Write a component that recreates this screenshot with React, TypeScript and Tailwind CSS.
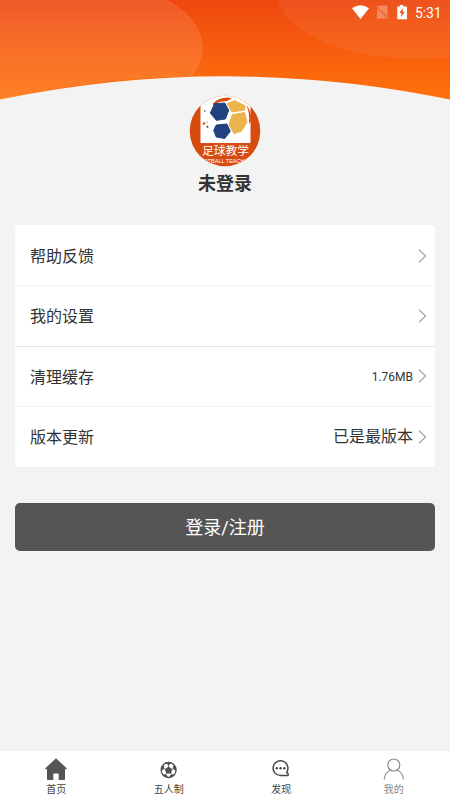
import type { ReactNode } from "react";

type MenuItem = {
  label: string;
  value?: string;
  valueClass?: string;
  borderClass: string;
};

type Tab = {
  label: string;
  icon: ReactNode;
  active?: boolean;
};

const menuItems: MenuItem[] = [
  { label: "帮助反馈", borderClass: "border-b border-[#f4f4f4]" },
  { label: "我的设置", borderClass: "border-b border-[#e4e4e4]" },
  {
    label: "清理缓存",
    value: "1.76MB",
    valueClass: "pt-px text-[12px]",
    borderClass: "border-b border-[#f4f4f4]",
  },
  {
    label: "版本更新",
    value: "已是最版本",
    valueClass: "pt-px text-[16px]",
    borderClass: "",
  },
];

const tabs: Tab[] = [
  { label: "首页", icon: <HomeIcon /> },
  { label: "五人制", icon: <BallIcon /> },
  { label: "发现", icon: <ChatIcon /> },
  { label: "我的", icon: <UserIcon />, active: true },
];

function HomeIcon() {
  return (
    <svg className="h-6 w-6" viewBox="0 0 24 24" fill="#555">
      <path d="M12 1.2 22.6 11.3c.5.5.2 1-.4 1H21v9.7c0 .6-.3.9-.9.9h-5.4v-6.3H9.3v6.3H3.9c-.6 0-.9-.3-.9-.9v-9.7H1.8c-.6 0-.9-.5-.4-1z" />
    </svg>
  );
}

function BallIcon() {
  return (
    <svg className="h-6 w-6" viewBox="0 0 24 24">
      <circle cx="11.6" cy="13" r="7.5" fill="#fff" stroke="#505050" strokeWidth="1.3" />
      <g fill="#505050">
        <path d="m11.6 9.5 3.7 2.7-1.4 4.2H9.3l-1.4-4.2z" />
        <path d="m11.6 8.3-3.4-2.5h6.8zM4 14l3-2 .2-3.1-1.6-.6A8 8 0 0 0 4 14zM19.2 14l-3-2-.2-3.1 1.600-.6a8 8 0 0 1 1.600 5.700zM10.700 20.700 9.800 18l-2.900-.8-1.700.9a8 8 0 0 0 5.500 2.600zM12.500 20.700l.9-2.700 2.900-.8 1.700.9a8 8 0 0 1-5.500 2.600z" />
      </g>
      <path
        d="M11.6 10V7M8.500 12.300l-2-.8M14.700 12.300l2-.8M9.600 16l-1.300 1.800M13.600 16l1.300 1.800"
        stroke="#505050"
        strokeWidth=".8"
      />
    </svg>
  );
}

function ChatIcon() {
  return (
    <svg className="h-6 w-6" viewBox="0 -0.200 24 24" fill="none">
      <path
        d="M17.600 15.200A7.400 7.400 0 1 0 11.500 18.400h7.600v-2z"
        stroke="#484848"
        strokeWidth="1.500"
        strokeLinejoin="round"
      />
      <g fill="#484848">
        <circle cx="7.800" cy="11" r="1.200" />
        <circle cx="11.600" cy="11" r="1.200" />
        <circle cx="15.400" cy="11" r="1.200" />
      </g>
    </svg>
  );
}

function UserIcon() {
  return (
    <svg className="h-6 w-6" viewBox="0 0 24 24" fill="none" stroke="#8c8c8c" strokeWidth="1.2">
      <circle cx="11.8" cy="8" r="6" />
      <path d="M2.2 22c.6-4.7 3.6-8.2 7-9M21.4 22c-.6-4.7-3.6-8.2-7-9" strokeLinecap="round" />
    </svg>
  );
}

function StatusBar() {
  return (
    <div className="relative flex h-[25px] items-center justify-end gap-[6px] pr-[9px] text-white">
      <svg className="h-[15px] w-[58px]" viewBox="0 0 58 15">
        <path d="M1 3.2Q9.5-2.8 18 3.2L9.5 14z" fill="#fff" />
        <path d="M29 .6h7.5v10.2L27 1.9zM26 3.2l9.8 10.2H26zM24.6.8l.8-.6 12.4 13-.8.6z" fill="#fff" opacity=".3" />
        <path d="M48.8 0h3.5v1.4H56v12.8H46.3V1.4h2.5z" fill="#fff" />
        <path d="m52 3-3.7 5.1h2.2l-.5 4.1 3.8-5.400h-2.200z" fill="#e8541c" />
      </svg>
      <span className="w-[26px] font-[Roboto,sans-serif] text-[14px] leading-none tracking-[-0.1px]">5:31</span>
    </div>
  );
}

function Header() {
  return (
    <header className="relative h-[95px]">
      <svg className="absolute top-0 left-0 h-[100px] w-full" viewBox="0 0 450 100">
        <defs>
          <linearGradient id="sky" x1="0" y1="0" x2="0" y2="1">
            <stop offset="0" stopColor="#ee480f" />
            <stop offset="1" stopColor="#ff720c" />
          </linearGradient>
        </defs>
        <path d="M0 0H450V99.5Q225 53 0 99.5z" fill="url(#sky)" />
        <path d="M0 0H168C190 13 203 30 203 47C203 58 199 67 192 76.5Q95 78 0 99.5z" fill="#fff" opacity=".11" />
        <path d="M278 0C282 28 340 58 408 58Q430 59 450 57V0z" fill="#fff" opacity=".06" />
      </svg>
      <StatusBar />
    </header>
  );
}

function Logo() {
  return (
    <svg className="relative h-[72px] w-[72px]" viewBox="0 0 72 72">
      <defs>
        <clipPath id="badge">
          <circle cx="36" cy="36" r="35.3" />
        </clipPath>
      </defs>
      <g clipPath="url(#badge)">
        <rect width="72" height="72" fill="#d64c10" />
        <path d="M11.5 0H61.5V48H11.5z" fill="#fff" />
        <path d="M24 8.5q5-6 15-6l4 1-5 2.5-8 1-6 4zM57.5 10q5 6 4.5 16l-2 3q1-10-2.5-19z" fill="#d64c10" />
        <path d="m25.7 8.700 10-.7 4 7.300-3.400 8.700-9 1.300-6-7.300z" fill="#21417f" stroke="#21417f" strokeLinejoin="round" />
        <path d="m27.300 30 10.500-1 3.500 7.300-5.600 7.200-8.400-1.500-2.600-6.700z" fill="#21417f" stroke="#21417f" strokeLinejoin="round" />
        <path d="m38.300 8.700 7.400-3.200 10.300 5.200-.3 4.300-12.700 2z" fill="#ecb54c" stroke="#ecb54c" strokeLinejoin="round" />
        <path d="m43.300 19.700 12.400-2.200 2.300 9.800-5.700 9-7.300 2.200-5-8.800z" fill="#ecb54c" stroke="#ecb54c" strokeLinejoin="round" />
        <circle cx="15" cy="28.5" r="1.3" fill="#d64c10" />
        <circle cx="18.5" cy="31.8" r="1" fill="#21417f" />
        <circle cx="18" cy="27" r=".6" fill="#21417f" />
        <circle cx="15.8" cy="16" r=".8" fill="#21417f" />
        <text x="36.5" y="59.5" textAnchor="middle" fontSize="11.8" fill="#fff" className="font-['Noto_Sans_CJK_SC',sans-serif]">
          足球教学
        </text>
        <text x="36" y="68" textAnchor="middle" fontSize="5.5" fill="#fff" className="font-['Liberation_Sans',sans-serif]">
          FOOTBALL TEACHING
        </text>
      </g>
    </svg>
  );
}

function Chevron() {
  return (
    <svg className="h-[14px] w-[9px]" viewBox="0 0 9 14" fill="none" stroke="#a8a8a8" strokeWidth="1.3">
      <path d="m1 .8 6.5 6.2L1 13.2" />
    </svg>
  );
}

export default function App() {
  return (
    <main className="flex h-[800px] w-[450px] flex-col overflow-hidden bg-[#f3f3f3] font-[Roboto,'Noto_Sans_CJK_SC',sans-serif] text-[#333]">
      <Header />

      <section className="flex flex-col items-center">
        <Logo />
        <h1 className="mt-1 text-[18px] leading-[26px] font-bold">未登录</h1>
      </section>

      <ul className="mx-[15px] mt-7 rounded-[4px] bg-white pt-px">
        {menuItems.map((item) => (
          <li
            key={item.label}
            className={`flex h-[60.25px] items-center justify-between pr-2 pl-[15px] ${item.borderClass}`}
          >
            <span className="pt-[3px] text-[16px]">{item.label}</span>
            <span className="flex items-center gap-[5px]">
              <span className={item.valueClass}>{item.value}</span>
              <Chevron />
            </span>
          </li>
        ))}
      </ul>

      <button className="mx-[15px] mt-9 h-12 rounded-[5px] bg-[#555] text-[18px] text-white">
        登录/注册
      </button>

      <nav className="mt-auto grid h-[50px] grid-cols-4 border-t border-[#f0f0f0] bg-white">
        {tabs.map((tab) => (
          <button key={tab.label} className="flex flex-col items-center pt-[6px]">
            {tab.icon}
            <span
              className={`mt-[2px] text-[10px] leading-[14px] ${tab.active ? "text-[#888]" : "text-[#444]"}`}
            >
              {tab.label}
            </span>
          </button>
        ))}
      </nav>
    </main>
  );
}
